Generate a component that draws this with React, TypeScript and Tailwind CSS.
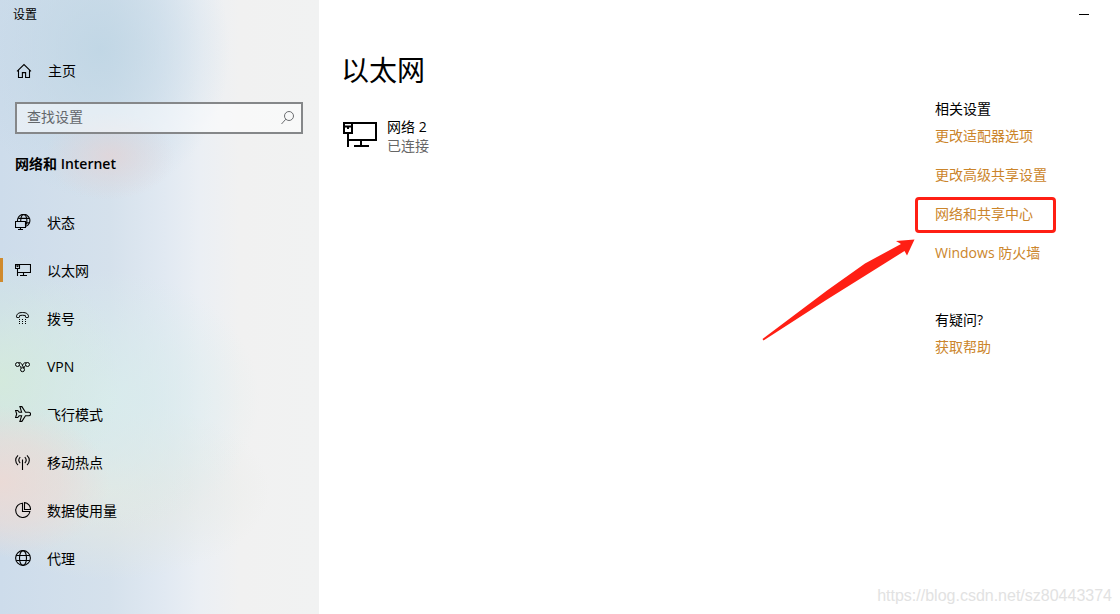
import type { ReactNode } from "react";

function Icon({ children }: { children: ReactNode }) {
  return (
    <svg
      className="size-4 shrink-0"
      viewBox="0 0 16 16"
      fill="none"
      stroke="currentColor"
      strokeWidth="1.1"
      aria-hidden="true"
    >
      {children}
    </svg>
  );
}

const HomeIcon = () => (
  <Icon>
    <path d="M1 8.3 8 1.6l7 6.7M2.5 7v7.5h3.9V9.6h3.2v4.9h3.9V7" />
  </Icon>
);

const StatusIcon = () => (
  <Icon>
    <path d="M2.5 7A6.2 6.2 0 1 1 11 12.2" />
    <path d="M5.7 7C5.8 3.2 7 .6 8.7.6s3.2 2.6 3.2 5.8c0 2-.4 3.6-1 4.6M3.2 4.4h11M11 8.9h3.2" />
    <path d="M.5 7.5h10v6H.5zM5.5 13.5v2M3 15.5h5" />
  </Icon>
);

const EthernetIcon = () => (
  <Icon>
    <path d="M.5 2.5h4v4h-4zM1.5 3.5l1 1 1-1M4.5 2.5h11v8h-13M2.5 6.5V14M8.5 10.5v3M5 13.5h7" />
  </Icon>
);

const DialIcon = () => (
  <Icon>
    <path
      strokeWidth="1"
      d="M1.5 6.8C1.5 4 3.6 2.5 7.5 2.5s6 1.5 6 4.3c0 .5-.2.7-.6.7h-1.7c-.5 0-.7-.3-.7-.7V5.7c-1.8-.6-4.2-.6-6 0v1.1c0 .4-.2.7-.7.7H2.1c-.4 0-.6-.2-.6-.7z"
    />
    <path strokeWidth="1" d="M4 9.5h1M7 9.5h1M10 9.5h1M4 11.5h1M7 11.5h1M10 11.5h1M4 13.5h1M7 13.5h1M10 13.5h1" />
  </Icon>
);

const VpnIcon = () => (
  <Icon>
    <g strokeWidth="1">
      <circle cx="2.5" cy="6.5" r="2" />
      <circle cx="12.5" cy="6.5" r="2" />
      <circle cx="7.5" cy="11.7" r="2" />
      <path d="M3.6 4.8c1.6-.6 2.5.3 3.2 1.3l2.3 4.3M4.2 7.6c.8.2 1.4.8 1.8 2.4M11.4 4.8c-1.6-.6-2.5.3-3.2 1.3L7 8.4M10.8 7.6c-.8.2-1.4.8-1.8 2.4" />
    </g>
  </Icon>
);

const PlaneIcon = () => (
  <Icon>
    <path d="M4.9.6h2l3.6 5.6h3.3c1 0 1.7.8 1.7 1.8s-.7 1.8-1.7 1.8h-3.3l-3.6 5.6h-2l1.7-5.6H4.2l-1.5 1.7H.6L1.7 8 .6 4.5h2.1l1.5 1.7h2.4z" />
  </Icon>
);

const HotspotIcon = () => (
  <Icon>
    <path d="M7.5 5.5V16M3 1.3C-.1 4.3-.1 8 3 11M5.2 3.2c-1.7 1.8-1.7 4.2 0 6M12 1.3c3.1 3 3.1 6.7 0 9.7M9.8 3.2c1.7 1.8 1.7 4.2 0 6" />
  </Icon>
);

const UsageIcon = () => (
  <Icon>
    <path d="M7.5 1.2a7.15 7.15 0 1 0 7.4 8.3H7.5z" />
    <path d="M9.5.6v6.9h6A6.6 6.6 0 0 0 9.5.6z" />
  </Icon>
);

const ProxyIcon = () => (
  <Icon>
    <circle cx="8" cy="8" r="7.4" />
    <ellipse cx="8" cy="8" rx="3.5" ry="7.4" />
    <path d="M1.2 5.5h13.6M1.2 10.5h13.6" />
  </Icon>
);

const navItems = [
  { label: "状态", icon: <StatusIcon />, active: false },
  { label: "以太网", icon: <EthernetIcon />, active: true },
  { label: "拨号", icon: <DialIcon />, active: false },
  { label: "VPN", icon: <VpnIcon />, active: false },
  { label: "飞行模式", icon: <PlaneIcon />, active: false },
  { label: "移动热点", icon: <HotspotIcon />, active: false },
  { label: "数据使用量", icon: <UsageIcon />, active: false },
  { label: "代理", icon: <ProxyIcon />, active: false },
];

const relatedLinks = [
  { label: "更改适配器选项", highlighted: false },
  { label: "更改高级共享设置", highlighted: false },
  { label: "网络和共享中心", highlighted: true },
  { label: "Windows 防火墙", highlighted: false },
];

function Callout() {
  return (
    <>
      <span className="pointer-events-none absolute -top-[7px] -right-[23px] -bottom-[9px] -left-5 rounded-sm border-3 border-[#ff1f14]" />
      <svg
        className="pointer-events-none absolute top-full right-full mt-3.5 mr-5 h-[104px] w-[154px]"
        viewBox="0 0 154 104"
        fill="#ff1f14"
        aria-hidden="true"
      >
        <path d="M1.5 101 66 52.500 104 25.500 140 6 135 3 153.500 1.500 146 17.500 143.500 13 106 36.500 66 61.500 2.500 102.500Z" />
      </svg>
    </>
  );
}

function Sidebar() {
  return (
    <aside className="w-[319px] shrink-0 bg-[#f1f1f1] bg-[radial-gradient(ellipse_65px_44px_at_110px_156px,rgba(228,212,214,0.75),rgba(228,212,214,0.35)_50%,transparent),radial-gradient(ellipse_110px_76px_at_0px_482px,rgba(234,218,214,1),rgba(234,218,214,0.6)_55%,transparent),radial-gradient(ellipse_120px_130px_at_0px_380px,rgba(212,234,220,0.95),rgba(212,234,224,0.5)_50%,transparent),radial-gradient(ellipse_150px_130px_at_110px_400px,rgba(217,236,236,0.9),rgba(217,236,236,0.5)_50%,transparent),radial-gradient(ellipse_160px_90px_at_110px_490px,rgba(228,232,226,0.9),rgba(228,232,226,0.5)_50%,transparent),radial-gradient(ellipse_130px_150px_at_100px_50px,rgba(190,213,228,0.85),rgba(190,213,228,0.45)_50%,transparent),linear-gradient(90deg,#cddceb_0px,#d5e1ec_110px,#e1e9f2_165px,#ebeff4_200px,#f1f1f1_240px,#f1f2f2_319px)]">
      <div className="px-[13px] pt-[5px] text-xs leading-5">设置</div>
      <a href="#home" className="mt-[22px] flex h-12 items-center gap-4 px-4">
        <HomeIcon />
        <span>主页</span>
      </a>
      <form className="relative mt-[7px] mr-4 ml-[15px]" role="search">
        <input
          type="search"
          aria-label="查找设置"
          placeholder="查找设置"
          className="h-8 w-full border-2 border-[#858789] bg-white/50 pr-8 pb-1 pl-2.5 outline-none placeholder:text-[#63676b]"
        />
        <button type="button" aria-label="搜索" className="absolute top-2 right-[7px] text-[#6b6d70]">
          <svg className="size-4" viewBox="0 0 16 16" fill="none" stroke="currentColor" aria-hidden="true">
            <circle cx="9" cy="6" r="4.5" />
            <path d="M5.8 9.2 1.5 14" />
          </svg>
        </button>
      </form>
      <h2 className="mt-5 px-[15px] leading-5 font-semibold">网络和 Internet</h2>
      <nav className="mt-6 pb-[30px]">
        {navItems.map((item) => (
          <a
            key={item.label}
            href="#"
            aria-current={item.active ? "page" : undefined}
            className="relative flex h-12 items-center gap-4 px-[15px]"
          >
            {item.active && <span className="absolute top-3 bottom-3 left-0 w-[3px] bg-[#d08a2c]" />}
            {item.icon}
            <span className="pt-0.5">{item.label}</span>
          </a>
        ))}
      </nav>
    </aside>
  );
}

export default function App() {
  return (
    <div className="relative flex min-h-screen bg-white font-['Open_Sans','Noto_Sans_CJK_SC',sans-serif] text-sm text-black">
      <Sidebar />
      <div className="flex min-w-0 flex-1 flex-col">
        <header className="flex justify-end pr-3">
          <button type="button" aria-label="最小化" className="flex h-7 w-12 items-center justify-center">
            <span className="h-px w-2.5 bg-black" />
          </button>
        </header>
        <div className="flex flex-1">
          <main className="flex-1 pt-6 pl-[22px]">
            <h1 className="text-[28px] leading-9">以太网</h1>
            <div className="mt-[29px] flex gap-2.5">
              <svg
                className="mt-1 h-[27px] w-9"
                viewBox="0 0 36 27"
                fill="none"
                stroke="currentColor"
                strokeWidth="2"
                aria-hidden="true"
              >
                <path d="M3 2h8v10H3zM3 5.5h8M7 5v3M11 2h24v17H7M7 12v14M20 19v6M13 25h15" />
              </svg>
              <div className="leading-5">
                <p>网络 2</p>
                <p className="-mt-px text-[#666666]">已连接</p>
              </div>
            </div>
          </main>
          <aside className="w-[185px] pt-[71px] leading-5">
            <h2>相关设置</h2>
            <ul className="mt-[7px] flex flex-col items-start gap-[19px] text-[#cb852b]">
              {relatedLinks.map((link) => (
                <li key={link.label} className="relative">
                  <a href="#">{link.label}</a>
                  {link.highlighted && <Callout />}
                </li>
              ))}
            </ul>
            <h2 className="mt-[47px]">有疑问?</h2>
            <a href="#help" className="mt-[7px] block text-[#cb852b]">
              获取帮助
            </a>
          </aside>
        </div>
      </div>
      <p className="absolute right-2 bottom-2 font-['Liberation_Sans',sans-serif] text-base leading-5 text-[#e2e2e2]">
        https://blog.csdn.net/sz80443374
      </p>
    </div>
  );
}
